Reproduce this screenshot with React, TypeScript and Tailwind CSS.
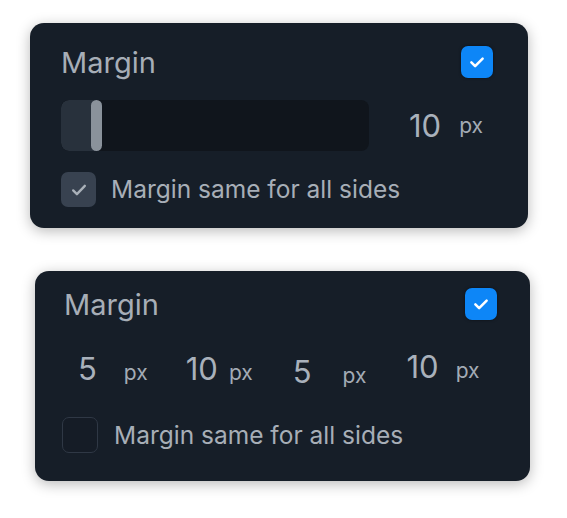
import React from 'react';

const font = { fontFamily: 'Inter, "Noto Sans", sans-serif' };

function BlueCheck({ className = '' }: { className?: string }) {
  return (
    <div className={`w-[32px] h-[32px] rounded-[7px] bg-[#0d86f7] flex items-center justify-center shadow-[0_0_3px_rgba(0,0,0,0.5)] ${className}`}>
      <svg width="18" height="18" viewBox="0 0 24 24" fill="none" stroke="white" strokeWidth="3.4" strokeLinecap="round" strokeLinejoin="round">
        <path d="M4.5 12.5l5 5 10-10" />
      </svg>
    </div>
  );
}

function SideValue({ value, numMl, pxMl, mt }: { value: string; numMl: string; pxMl: string; mt: string }) {
  return (
    <div className={`flex items-baseline ${mt}`}>
      <span className={`text-[31px] leading-none text-[#a9b1bb] ${numMl}`}>{value}</span>
      <span className={`text-[21px] leading-none text-[#a3abb5] ${pxMl}`}>px</span>
    </div>
  );
}

export default function App() {
  return (
    <div className="w-[567px] h-[518px] bg-white overflow-hidden" style={font}>
      {/* card one: single value slider */}
      <div className="ml-[30px] mt-[23px] w-[498px] h-[205px] rounded-[14px] bg-[#161e28] shadow-[0_3px_14px_rgba(0,0,0,0.28)] pl-[31px] pr-[35px] pt-[23px] flex flex-col">
        <div className="flex items-center justify-between h-[32px]">
          <span className="text-[29px] leading-none text-[#a7aeb7]">Margin</span>
          <BlueCheck />
        </div>
        <div className="flex items-center mt-[22px] h-[51px]">
          <div className="w-[308px] h-[51px] rounded-[8px] bg-[#10151c] flex items-center overflow-hidden">
            <div className="w-[36px] h-full bg-[#28313c] rounded-l-[8px]" />
            <div className="w-[11px] h-[51px] -ml-[6px] rounded-full bg-[#8a929b]" />
          </div>
          <span className="ml-[40px] text-[31px] leading-none text-[#a9b1bb]">10</span>
          <span className="ml-[18px] text-[21px] leading-none text-[#a3abb5]">px</span>
        </div>
        <div className="flex items-center mt-[21px] h-[35px]">
          <div className="w-[35px] h-[35px] rounded-[7px] bg-[#384250] flex items-center justify-center">
            <svg width="20" height="20" viewBox="0 0 24 24" fill="none" stroke="#aab1b9" strokeWidth="2.8" strokeLinecap="round" strokeLinejoin="round">
              <path d="M5 12.5l4.5 4.5 9.5-10" />
            </svg>
          </div>
          <span className="ml-[15px] text-[24.5px] leading-none text-[#a7aeb7]">Margin same for all sides</span>
        </div>
      </div>

      {/* card two: per-side values */}
      <div className="ml-[35px] mt-[43px] w-[495px] h-[210px] rounded-[14px] bg-[#161e28] shadow-[0_3px_14px_rgba(0,0,0,0.28)] pl-[27px] pr-[33px] pt-[17px] flex flex-col">
        <div className="flex items-center justify-between h-[32px]">
          <span className="ml-[2px] text-[29px] leading-none text-[#a7aeb7]">Margin</span>
          <BlueCheck />
        </div>
        <div className="flex items-start mt-[31px] h-[40px]">
          <SideValue value="5" numMl="ml-[16px]" pxMl="ml-[27px]" mt="mt-[2px]" />
          <SideValue value="10" numMl="ml-[38px]" pxMl="ml-[11px]" mt="mt-[2px]" />
          <SideValue value="5" numMl="ml-[40px]" pxMl="ml-[31px]" mt="mt-[5px]" />
          <SideValue value="10" numMl="ml-[40px]" pxMl="ml-[17px]" mt="mt-[0px]" />
        </div>
        <div className="flex items-center mt-[26px] h-[36px]">
          <div className="w-[36px] h-[36px] rounded-[7px] border border-[#2f3845] bg-[#151c26]" />
          <span className="ml-[16px] text-[24.5px] leading-none text-[#a7aeb7]">Margin same for all sides</span>
        </div>
      </div>
    </div>
  );
}
